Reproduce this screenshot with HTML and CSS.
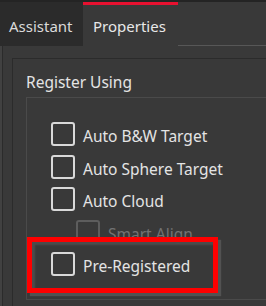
FILE: index.html
```html
<!DOCTYPE html>
<html lang="en">
<head>
  <meta charset="UTF-8" />
  <title>Register Using</title>
  <link rel="stylesheet" href="styles.css">
</head>
<body>
  <div class="topline"></div>

  <!-- tab strip -->
  <div class="tabs">
    <div class="tab">Assistant</div>
    <div class="tab active">Properties</div>
    <div class="tab-fill"></div>
  </div>

  <div class="panel">
    <div class="group">
      <div class="group-title">Register Using</div>
      <div class="frame">
        <div class="opt"><span class="box"></span><span class="label">Auto B&amp;W Target</span></div>
        <div class="opt"><span class="box"></span><span class="label">Auto Sphere Target</span></div>
        <div class="opt"><span class="box"></span><span class="label">Auto Cloud</span></div>
        <div class="opt sub disabled"><span class="box"></span><span class="label">Smart Align</span></div>
        <div class="opt"><span class="box"></span><span class="label">Pre-Registered</span></div>
      </div>
    </div>

    <!-- red highlight drawn over the option -->
    <div class="callout"></div>
  </div>
</body>
</html>
```

FILE: styles.css
```css
body {
  margin: 0;
  width: 266px;
  height: 306px;
  overflow: hidden;
  background: #393939;
  font-family: "Noto Sans", "Open Sans", sans-serif;
  color: #e4e4e4;
}
.topline {
  height: 2px;
  background: #242424;
}
.tabs {
  display: flex;
  height: 44px;
}
.tab {
  box-sizing: border-box;
  height: 44px;
  padding: 14px 0 0 9px;
  font-size: 15px;
  line-height: 20px;
  background: #2b2b2b;
  color: #dadada;
  width: 83px;
}
.tab.active {
  width: 95px;
  padding-left: 10px;
  background: #393939;
  color: #e8e8e8;
  border-top: 3px solid #e81130;
  padding-top: 11px;
}
.tab-fill {
  flex: 1;
  border-bottom: 1px solid #575757;
}
.panel {
  position: relative;
  box-sizing: border-box;
  height: 260px;
  border-left: 2px solid #414141;
  box-shadow: inset 1px 0 0 #2b2b2b;
  padding: 12px 0 0 10px;
  overflow: hidden;
}
.group {
  box-sizing: border-box;
  height: 248px;
  border-top: 1px solid #2b2b2b;
  border-left: 1px solid #2b2b2b;
  padding: 13px 0 0 13px;
}
.group-title {
  font-size: 15.5px;
  line-height: 20px;
  margin-bottom: 5px;
}
.frame {
  box-sizing: border-box;
  height: 203px;
  border: 1px solid #4a4a4a;
  border-right: none;
  padding: 24px 0 0 24px;
  display: flex;
  flex-direction: column;
  gap: 8.5px;
}
.opt {
  display: flex;
  align-items: flex-start;
  height: 24px;
}
.box {
  box-sizing: border-box;
  width: 24px;
  height: 24px;
  border: 2px solid #d9d9d9;
  border-radius: 3px;
  margin-right: 8px;
  flex-shrink: 0;
}
.label {
  font-size: 15.5px;
  line-height: 24px;
  padding-top: 2px;
  white-space: nowrap;
}
.opt.sub {
  margin-left: 25px;
}
.disabled .box {
  border-color: #5d5d5d;
}
.disabled .label {
  color: #727272;
}
.callout {
  position: absolute;
  left: 25px;
  top: 191px;
  width: 191px;
  height: 56px;
  box-sizing: border-box;
  border: 5px solid #ff0000;
  box-shadow: 3px 3px 1px #525252, inset 3px 3px 2px #4c4c4c;
}
```
